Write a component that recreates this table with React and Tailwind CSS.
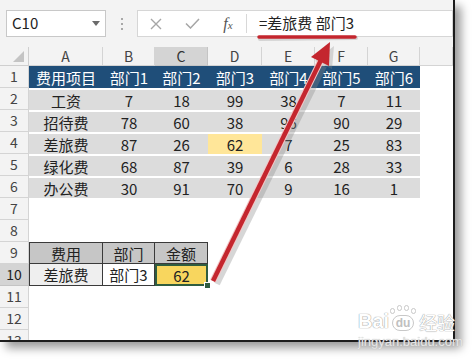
import React from 'react';

const rows = {
  1: ['费用项目', '部门1', '部门2', '部门3', '部门4', '部门5', '部门6'],
  2: ['工资', '7', '18', '99', '38', '7', '11'],
  3: ['招待费', '78', '60', '38', '96', '90', '29'],
  4: ['差旅费', '87', '26', '62', '7', '25', '83'],
  5: ['绿化费', '68', '87', '39', '6', '28', '33'],
  6: ['办公费', '30', '91', '70', '9', '16', '1'],
  9: ['费用', '部门', '金额'],
  10: ['差旅费', '部门3', '62'],
};

const letters = ['A', 'B', 'C', 'D', 'E', 'F', 'G', ''];

const cellClass = (r, c) => {
  const base = 'flex items-center justify-center text-[15px] leading-none';
  if (r === 1 && c < 7) return `${base} bg-[#1f4e79] text-white`;
  if (r >= 2 && r <= 6 && c < 7) {
    if (r === 4 && c === 3) return `${base} bg-[#ffe699] text-[#222] border-t-2 border-white`;
    return `${base} bg-[#dcdcdc] text-[#222] border-t-2 border-white`;
  }
  if (r === 9 && c < 3) {
    const left = c === 0 ? ' border-l' : '';
    return `${base} bg-[#c6c6c6] text-[#222] border-t border-r border-b border-[#3a3a3a]${left}`;
  }
  if (r === 10 && c === 0) return `${base} bg-[#efefef] text-[#222] border-l border-r border-b border-[#3a3a3a]`;
  if (r === 10 && c === 1) return `${base} bg-white text-[#222] border-r border-b border-[#3a3a3a]`;
  if (r === 10 && c === 2)
    return `${base} relative bg-[#f8d65e] text-[#222] border-2 border-[#2f5d40]`;
  return `${base} bg-white`;
};

function Toolbar() {
  return (
    <div className="h-[47px] shrink-0 bg-[#f3f3f3] flex items-start pt-[10px] pl-[6px]">
      <div className="w-[100px] h-[27px] bg-white border border-[#c8c8c8] flex items-center justify-between pl-[5px] pr-[5px]">
        <span className="text-[15px] text-[#222]">C10</span>
        <svg width="8" height="5" viewBox="0 0 8 5">
          <polygon points="0,0 8,0 4,5" fill="#6b6b6b" />
        </svg>
      </div>
      <div className="w-[31px] h-[27px] flex flex-col items-center justify-center gap-[3px]">
        <div className="w-[2px] h-[2px] bg-[#a8a8a8]"></div>
        <div className="w-[2px] h-[2px] bg-[#a8a8a8]"></div>
        <div className="w-[2px] h-[2px] bg-[#a8a8a8]"></div>
      </div>
      <div className="flex-1 h-[27px] bg-white border border-[#d6d6d6] flex items-center">
        <div className="w-[36px] flex justify-center">
          <svg width="12" height="12" viewBox="0 0 12 12">
            <path d="M1 1 L11 11 M11 1 L1 11" stroke="#a6a6a6" strokeWidth="1.4" />
          </svg>
        </div>
        <div className="w-[36px] flex justify-center">
          <svg width="15" height="11" viewBox="0 0 15 11">
            <path d="M1 5.5 L5.5 10 L14 1" stroke="#a6a6a6" strokeWidth="1.5" fill="none" />
          </svg>
        </div>
        <div className="w-[36px] flex justify-center">
          <span className="italic font-['Liberation_Serif',serif] text-[16px] text-[#555]">
            f<span className="text-[11px]">x</span>
          </span>
        </div>
        <div className="w-px h-[19px] bg-[#d8d8d8]"></div>
        <div className="pl-[12px] text-[15px] text-[#222]">=差旅费 部门3</div>
      </div>
    </div>
  );
}

function Sheet() {
  const cells = [];
  // column header row
  cells.push(
    <div key="corner" className="bg-[#f3f3f3] border-r border-b border-[#cfcfcf] flex items-end justify-end pr-[4px] pb-[3px]">
      <svg width="11" height="11" viewBox="0 0 11 11">
        <polygon points="11,0 11,11 0,11" fill="#c4c4c4" />
      </svg>
    </div>
  );
  letters.forEach((l, i) => {
    cells.push(
      <div
        key={'h' + i}
        className={
          i === 2
            ? 'flex items-center justify-center bg-[#d4d4d4] border-r border-b border-[#c4c4c4] text-[14px] text-[#333]'
            : 'flex items-center justify-center bg-[#f3f3f3] border-r border-b border-[#d4d4d4] text-[14px] text-[#444]'
        }
      >
        {l}
      </div>
    );
  });

  for (let r = 1; r <= 13; r++) {
    cells.push(
      <div
        key={'r' + r}
        className={
          r === 10
            ? 'flex items-center justify-center bg-[#d4d4d4] border-r border-b border-[#c4c4c4] text-[14px] text-[#222]'
            : 'flex items-center justify-center bg-[#f3f3f3] border-r border-b border-[#d4d4d4] text-[14px] text-[#444]'
        }
      >
        {r}
      </div>
    );
    for (let c = 0; c < 8; c++) {
      const val = rows[r] ? rows[r][c] : '';
      cells.push(
        <div key={r + '-' + c} className={cellClass(r, c)}>
          {val}
          {r === 10 && c === 2 && (
            <div className="absolute right-[-5px] bottom-[-5px] w-[7px] h-[7px] bg-[#2f5d40] border border-white"></div>
          )}
        </div>
      );
    }
  }

  return (
    <div className="grid grid-cols-[29px_74px_52px_53px_54px_53px_53px_52px_1fr] grid-rows-[19px_repeat(13,22px)]">
      {cells}
    </div>
  );
}

function Overlay() {
  return (
    <svg className="absolute left-0 top-0 pointer-events-none" width="476" height="363" viewBox="0 0 476 363">
      {/* underline under formula */}
      <line x1="260" y1="39" x2="356" y2="38" stroke="#9a9a9a" strokeOpacity="0.35" strokeWidth="4" strokeLinecap="round" />
      <line x1="259" y1="37" x2="355" y2="37" stroke="#c4262e" strokeWidth="3.5" strokeLinecap="round" />
      {/* arrow shadow */}
      <line x1="217" y1="284" x2="324" y2="66" stroke="#8a8a8a" strokeOpacity="0.35" strokeWidth="6" />
      <polygon points="334,46 315,61 332,69" fill="#8a8a8a" fillOpacity="0.3" />
      {/* arrow */}
      <line x1="213" y1="281" x2="321" y2="60" stroke="#f2c6c6" strokeWidth="6.5" />
      <line x1="213" y1="281" x2="321" y2="60" stroke="#c4262e" strokeWidth="4.5" />
      <polygon points="330,42 311,57 329,66" fill="#c4262e" />
    </svg>
  );
}

function Watermark() {
  return (
    <div className="absolute left-[358px] top-[308px] flex flex-col items-start whitespace-nowrap pointer-events-none">
      <div className="flex items-end gap-[1px]">
        <span className="text-[20px] leading-none font-bold text-white font-['Liberation_Sans',sans-serif] [text-shadow:0_0_1px_#9a9a9a,0_0_1px_#9a9a9a]">
          Bai
        </span>
        <div className="flex flex-col items-center">
          <div className="flex gap-[2px] mb-[1px]">
            <div className="w-[5px] h-[6px] rounded-full bg-white border border-[#c8c8c8]"></div>
            <div className="w-[5px] h-[6px] rounded-full bg-white border border-[#c8c8c8] -mt-[3px]"></div>
            <div className="w-[5px] h-[6px] rounded-full bg-white border border-[#c8c8c8] -mt-[3px]"></div>
            <div className="w-[5px] h-[6px] rounded-full bg-white border border-[#c8c8c8]"></div>
          </div>
          <div className="px-[3px] rounded-[8px] bg-white border border-[#c8c8c8] text-[12px] leading-[14px] font-bold text-[#c0c0c0] font-['Liberation_Sans',sans-serif]">
            du
          </div>
        </div>
        <span className="ml-[2px] text-[18px] leading-none text-white font-['Noto_Sans_CJK_SC',sans-serif] [text-shadow:0_0_1px_#9a9a9a,0_0_1px_#9a9a9a]">
          经验
        </span>
      </div>
      <div className="mt-[4px] text-[13px] leading-none text-[#e6e6e6] font-['Liberation_Sans',sans-serif] [text-shadow:0_0_1px_#b0b0b0]">
        jingyan.baidu.com
      </div>
    </div>
  );
}

export default function App() {
  return (
    <div className="relative w-[476px] h-[363px] bg-white overflow-hidden font-['Noto_Sans_CJK_SC',sans-serif]">
      <div className="w-[455px] h-[342px] bg-white border-r-2 border-b-2 border-[#1c1c1c] shadow-[6px_6px_9px_rgba(0,0,0,0.4)] overflow-hidden flex flex-col">
        <Toolbar />
        <Sheet />
      </div>
      <Overlay />
      <Watermark />
    </div>
  );
}
